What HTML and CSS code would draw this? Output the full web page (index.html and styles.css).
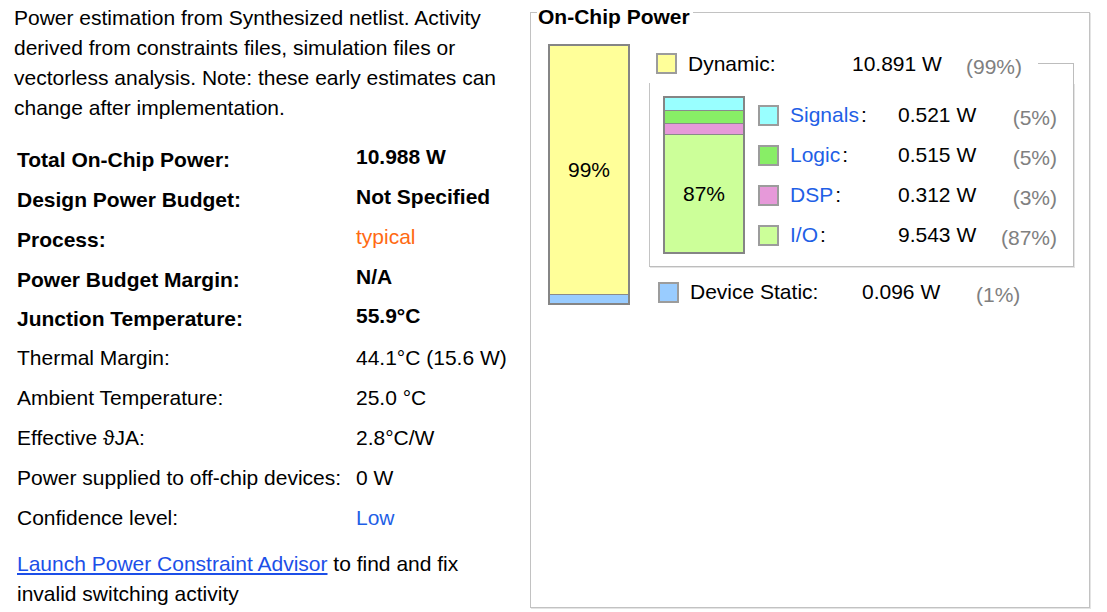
FILE: index.html
```html
<!DOCTYPE html>
<html>
<head>
<meta charset="utf-8">
<title>Power Summary</title>
<link rel="stylesheet" href="styles.css">
</head>
<body>
<div class="page">
  <div class="summary">
    <p class="intro">Power estimation from Synthesized netlist. Activity derived from constraints files, simulation files or vectorless analysis. Note: these early estimates can change after implementation.</p>
    <div class="stats">
      <div class="row b"><span class="k">Total On-Chip Power:</span><span class="v">10.988 W</span></div>
      <div class="row b"><span class="k">Design Power Budget:</span><span class="v">Not Specified</span></div>
      <div class="row b"><span class="k">Process:</span><span class="v orange">typical</span></div>
      <div class="row b"><span class="k">Power Budget Margin:</span><span class="v">N/A</span></div>
      <div class="row b tight"><span class="k">Junction Temperature:</span><span class="v">55.9°C</span></div>
      <div class="row"><span class="k">Thermal Margin:</span><span class="v">44.1°C (15.6 W)</span></div>
      <div class="row"><span class="k">Ambient Temperature:</span><span class="v">25.0 °C</span></div>
      <div class="row"><span class="k">Effective ϑJA:</span><span class="v">2.8°C/W</span></div>
      <div class="row"><span class="k">Power supplied to off-chip devices:</span><span class="v">0 W</span></div>
      <div class="row"><span class="k">Confidence level:</span><span class="v blue">Low</span></div>
    </div>
    <div class="advisor">
      <div class="adv-line"><a href="#">Launch Power Constraint Advisor</a><span> to find and fix</span></div>
      <div class="adv-line">invalid switching activity</div>
    </div>
  </div>

  <div class="panel">
    <div class="panel-title">On-Chip Power</div>
    <div class="panel-body">
      <div class="bar big">
        <div class="seg yellow main"><span>99%</span></div>
        <div class="seg lblue static"></div>
      </div>
      <div class="legend">
        <div class="dyn-row">
          <span class="sw yellow"></span>
          <span class="dl">Dynamic:</span>
          <span class="dv">10.891 W</span>
          <span class="dp pct">(99%)</span>
          <span class="bracket"></span>
        </div>
        <div class="dyn-box">
          <div class="bar small">
            <div class="seg cyan s1"></div>
            <div class="seg green s2"></div>
            <div class="seg pink s3"></div>
            <div class="seg lgreen main"><span>87%</span></div>
          </div>
          <div class="dyn-list">
            <div class="item"><span class="sw cyan"></span><span class="il"><span class="blue">Signals</span><span class="colon">:</span></span><span class="iv">0.521 W</span><span class="ip pct">(5%)</span></div>
            <div class="item"><span class="sw green"></span><span class="il"><span class="blue">Logic</span><span class="colon">:</span></span><span class="iv">0.515 W</span><span class="ip pct">(5%)</span></div>
            <div class="item"><span class="sw pink"></span><span class="il"><span class="blue">DSP</span><span class="colon">:</span></span><span class="iv">0.312 W</span><span class="ip pct">(3%)</span></div>
            <div class="item"><span class="sw lgreen"></span><span class="il"><span class="blue">I/O</span><span class="colon">:</span></span><span class="iv">9.543 W</span><span class="ip pct">(87%)</span></div>
          </div>
        </div>
        <div class="static-row">
          <span class="sw lblue"></span>
          <span class="sl">Device Static:</span>
          <span class="sv">0.096 W</span>
          <span class="sp pct">(1%)</span>
        </div>
      </div>
    </div>
  </div>
</div>
</body>
</html>
```

FILE: styles.css
```css
* { box-sizing: border-box; }

html, body {
  margin: 0;
  padding: 0;
  background: #ffffff;
}

body {
  font-family: "Liberation Sans", Arial, sans-serif;
  font-size: 21px;
  color: #000000;
}

.page {
  display: flex;
  align-items: flex-start;
  width: 1107px;
  height: 612px;
}

/* ---------- left summary ---------- */
.summary {
  width: 530px;
  flex: none;
}

.intro {
  margin: 3px 0 0 14px;
  width: 511px;
  line-height: 30px;
}

.stats {
  margin: 17px 0 0 17px;
}

.row {
  display: flex;
  align-items: center;
  height: 40px;
  white-space: nowrap;
}

.row.tight { height: 38px; }

.row .k { width: 339px; flex: none; }

.row.b { font-weight: bold; }
.row.b .v { padding-bottom: 6px; }

.orange { color: #ff6a13; font-weight: normal; }
.blue { color: #1f5fe6; }

.advisor {
  margin: 11px 0 0 17px;
  width: 480px;
}

.adv-line {
  height: 30px;
  line-height: 30px;
  white-space: nowrap;
}

.advisor a {
  color: #1c4fe8;
  text-decoration: underline;
}

/* ---------- right panel ---------- */
.panel {
  margin-top: 12px;
  width: 560px;
  height: 596px;
  flex: none;
  border: 1px solid #c2c2c2;
  box-shadow: 1px 1px 0 #e4e4e4;
}

.panel-title {
  width: fit-content;
  margin: -7px 0 0 6px;
  padding: 0 3px 0 1px;
  background: #ffffff;
  font-weight: bold;
  line-height: 22px;
}

.panel-body {
  display: flex;
  align-items: flex-start;
  padding: 16px 0 0 17px;
}

.bar {
  display: flex;
  flex-direction: column;
  width: 82px;
  border: 2px solid #858585;
  flex: none;
}

.bar.big { height: 261px; }
.bar.small { height: 158px; }

.seg { width: 100%; }
.seg.main {
  flex: 1;
  display: flex;
  align-items: center;
  justify-content: center;
}
.bar .seg + .seg { border-top: 1px solid #8a8a8a; }

.seg.static { height: 9px; }
.seg.s1 { height: 12px; }
.seg.s2 { height: 13px; }
.seg.s3 { height: 11px; }

.yellow { background: #ffff99; }
.lblue  { background: #99ccff; }
.cyan   { background: #99ffff; }
.green  { background: #88ee66; }
.pink   { background: #e699d9; }
.lgreen { background: #ccff99; }

.legend {
  margin-left: 19px;
  width: 425px;
  flex: none;
}

.sw {
  width: 21px;
  height: 21px;
  border: 2px solid #9c9c9c;
  flex: none;
}

.pct { color: #808080; padding-top: 6px; }

.dyn-row {
  display: flex;
  align-items: center;
  height: 39px;
  padding-left: 7px;
  white-space: nowrap;
}

.dyn-row .dl { margin-left: 11px; width: 164px; flex: none; }
.dyn-row .dv { width: 114px; flex: none; }
.dyn-row .dp { width: 72px; flex: none; }

.bracket {
  flex: 1;
  align-self: flex-end;
  height: 20px;
  border-top: 1px solid #bdbdbd;
  border-right: 1px solid #bdbdbd;
}

.dyn-box {
  display: flex;
  align-items: flex-start;
  padding: 13px 16px 11px 13px;
  border-left: 1px solid #c4c4c4;
  border-right: 1px solid #bdbdbd;
  border-bottom: 1px solid #bdbdbd;
  box-shadow: 1px 1px 0 #e4e4e4;
}

.dyn-list {
  margin: -1px 0 0 13px;
  flex: 1;
}

.item {
  display: flex;
  align-items: center;
  height: 40px;
  white-space: nowrap;
}

.item .il { margin-left: 11px; width: 108px; flex: none; }
.item .colon { margin-left: 2px; }
.item .iv { width: 100px; flex: none; }
.item .ip { flex: 1; text-align: right; }

.static-row {
  display: flex;
  align-items: center;
  height: 40px;
  margin-top: 5px;
  padding-left: 9px;
  white-space: nowrap;
}

.static-row .sl { margin-left: 11px; width: 172px; flex: none; }
.static-row .sv { width: 114px; flex: none; }
```
